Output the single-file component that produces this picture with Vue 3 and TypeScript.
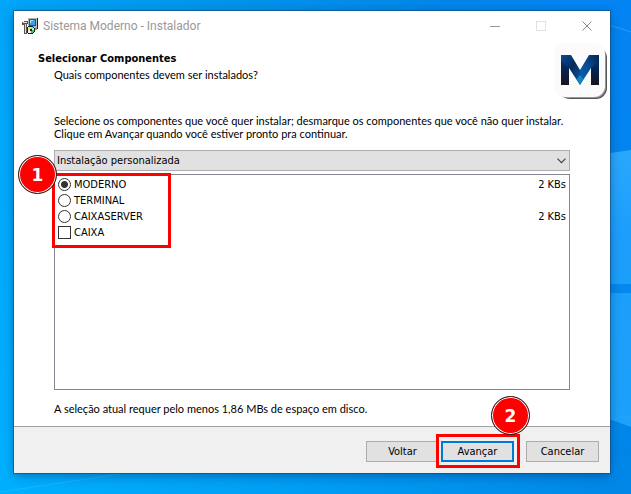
<script setup lang="ts">
import { ref } from 'vue'

interface Component {
  id: string
  label: string
  kind: 'radio' | 'checkbox'
  size?: string
}

const components: Component[] = [
  { id: 'moderno', label: 'MODERNO', kind: 'radio', size: '2 KBs' },
  { id: 'terminal', label: 'TERMINAL', kind: 'radio' },
  { id: 'caixaserver', label: 'CAIXASERVER', kind: 'radio', size: '2 KBs' },
  { id: 'caixa', label: 'CAIXA', kind: 'checkbox' },
]

const setupType = ref('custom')
const chosen = ref('moderno')
const caixa = ref(false)
</script>

<template>
  <div class="desktop">
    <svg class="wallpaper" viewBox="0 0 631 494" preserveAspectRatio="none" aria-hidden="true">
      <defs>
        <linearGradient id="sky" x1="0" y1="0" x2="1" y2="0">
          <stop offset="0" stop-color="#00a6f8" />
          <stop offset="0.35" stop-color="#0094ea" />
          <stop offset="0.7" stop-color="#0086e8" />
          <stop offset="1" stop-color="#0584f4" />
        </linearGradient>
        <linearGradient id="ground" x1="0" y1="0" x2="1" y2="0">
          <stop offset="0" stop-color="#00b0ff" />
          <stop offset="0.5" stop-color="#009cf4" />
          <stop offset="1" stop-color="#0086e6" />
        </linearGradient>
        <linearGradient id="fade" x1="0" y1="0" x2="0" y2="1">
          <stop offset="0" stop-color="#000" />
          <stop offset="1" stop-color="#fff" />
        </linearGradient>
        <mask id="lower"><rect width="631" height="494" fill="url(#fade)" /></mask>
        <linearGradient id="beam" x1="0" y1="0" x2="0" y2="1">
          <stop offset="0" stop-color="#2aa8fc" />
          <stop offset="0.3" stop-color="#1c9efc" />
          <stop offset="1" stop-color="#1ca2fa" />
        </linearGradient>
      </defs>
      <rect width="631" height="494" fill="url(#sky)" />
      <rect width="631" height="494" fill="url(#ground)" mask="url(#lower)" />
      <path d="M590 156 L631 150 V427 L590 412Z" fill="url(#beam)" />
      <path d="M590 284 H631 V293 H590Z" fill="#0588ee" />
      <path d="M600 22 L631 32" stroke="#2c9cfa" stroke-width="1" />
      <path d="M590 422 L631 416" stroke="#28a4f4" stroke-width="1" />
      <path d="M0 492 L120 474" stroke="#18b6ff" stroke-width="1" />
    </svg>

    <main class="window">
      <header class="titlebar">
        <svg class="app-icon" viewBox="0 0 16 16" shape-rendering="crispEdges" aria-hidden="true">
          <path d="M1 4h4v12H2V7H0V5h1z" fill="#777" />
          <path d="M0 4h2V3h4v1h1v2H5v10H2V7H0z" fill="#555" />
          <path d="M1 4h4v1H1zM3 6h1v9H3z" fill="#ddd" />
          <path d="M6 0h10v10H6z" fill="#b8b8a8" />
          <path d="M15 0h1v11H8v-1h7z" fill="#222" />
          <path d="M7 1h7v7H7z" fill="#0754c8" />
          <path d="M8 2h5v5H8z" fill="#37a0ff" />
          <path d="M8 2h3v1H9v2H8z" fill="#a8e4ff" />
          <path d="M10 10h5v2h-4z" fill="#888" />
          <path d="M6 8h5v1h1v1h1v4h-1v1h-1v1H6v-1H5V9h1z" fill="#222" />
          <path d="M6 9h5v1h1v4h-1v1H6z" fill="#eee" />
          <path d="M6 9h3v3H6z" fill="#d8f060" />
          <path d="M9 12h3v2h-1v1H9z" fill="#30c860" />
          <path d="M9 9h2v2H9z" fill="#70e0f0" />
          <path d="M8 11h2v2H8z" fill="#222" />
        </svg>
        <span class="title">Sistema Moderno - Instalador</span>
        <div class="controls">
          <button type="button" aria-label="Minimizar">
            <svg viewBox="0 0 11 11" shape-rendering="crispEdges"><path d="M0 5.5h10" stroke="#999" /></svg>
          </button>
          <button type="button" aria-label="Maximizar" disabled>
            <svg viewBox="0 0 11 11" shape-rendering="crispEdges"><path d="M.5.5h9v9h-9z" fill="none" stroke="#e2e2e2" /></svg>
          </button>
          <button type="button" aria-label="Fechar">
            <svg viewBox="0 0 11 11"><path d="M.5.5l9 9M9.5.5l-9 9" fill="none" stroke="#888" /></svg>
          </button>
        </div>
      </header>

      <section class="heading">
        <div>
          <h1>Selecionar Componentes</h1>
          <p>Quais componentes devem ser instalados?</p>
        </div>
        <svg class="logo" viewBox="0 0 54 56" aria-hidden="true">
          <defs>
            <linearGradient id="stem" x1="0" y1="0" x2="0" y2="1">
              <stop offset="0" stop-color="#063a78" />
              <stop offset="0.5" stop-color="#082450" />
              <stop offset="1" stop-color="#15141c" />
            </linearGradient>
            <linearGradient id="left" x1="0" y1="0" x2="1" y2="1">
              <stop offset="0" stop-color="#0a4a94" />
              <stop offset="0.5" stop-color="#052c5c" />
              <stop offset="1" stop-color="#0b5ca8" />
            </linearGradient>
            <linearGradient id="right" x1="1" y1="0" x2="0" y2="1">
              <stop offset="0" stop-color="#04244e" />
              <stop offset="0.5" stop-color="#084c96" />
              <stop offset="1" stop-color="#0c68b4" />
            </linearGradient>
          </defs>
          <rect x="5" y="4" width="48" height="52" rx="11" fill="#555" />
          <rect x="3" y="3" width="49" height="52" rx="11" fill="#999" />
          <rect x="0" y="0" width="51" height="54" rx="11" fill="#fbfbfb" />
          <path d="M7 12h8v30H7z" fill="url(#stem)" />
          <path d="M37 12h8v30h-8z" fill="url(#stem)" />
          <path d="M7 12h10l9 15v15L15 25 7 18z" fill="url(#left)" />
          <path d="M45 12H35l-9 15v15l11-17 8-7z" fill="url(#right)" />
          <path d="M26 32l3 4-3 6-3-6z" fill="#0f86cc" />
        </svg>
      </section>

      <form class="body" @submit.prevent>
        <p class="intro">
          Selecione os componentes que você quer instalar; desmarque os componentes que você não quer instalar.<br />
          Clique em Avançar quando você estiver pronto pra continuar.
        </p>
        <div class="combo">
          <select v-model="setupType" aria-label="Tipo de instalação">
            <option value="custom">Instalação personalizada</option>
          </select>
          <svg viewBox="0 0 9 6" aria-hidden="true"><path d="M.5.7l4 4 4-4" fill="none" stroke="#444" stroke-width="1.2" /></svg>
        </div>

        <div class="list">
          <div v-for="item in components" :key="item.id" class="row">
            <input v-if="item.kind === 'radio'" :id="item.id" v-model="chosen" type="radio" name="component" :value="item.id" />
            <input v-else :id="item.id" v-model="caixa" type="checkbox" />
            <label :for="item.id">{{ item.label }}</label>
            <span v-if="item.size">{{ item.size }}</span>
          </div>
          <div class="mark mark-list"></div>
          <div class="badge badge-list">1</div>
        </div>
        <p class="space">A seleção atual requer pelo menos 1,86 MBs de espaço em disco.</p>
      </form>

      <footer class="footer">
        <button type="button">Voltar</button>
        <div class="next">
          <button type="button" class="primary">Avançar</button>
          <div class="mark mark-next"></div>
          <div class="badge badge-next">2</div>
        </div>
        <button type="button">Cancelar</button>
      </footer>
    </main>
  </div>
</template>

<style>
body {
  margin: 0;
}
</style>

<style scoped>
.desktop,
.desktop * {
  box-sizing: border-box;
}
.desktop {
  position: relative;
  display: flex;
  min-height: 100vh;
  padding: 11px 21px 21px 14px;
  font: 11px/13px "DejaVu Sans Condensed", "DejaVu Sans", Tahoma, sans-serif;
  color: #000;
}
.wallpaper {
  position: absolute;
  inset: 0;
  width: 100%;
  height: 100%;
}
.window {
  position: relative;
  display: flex;
  flex: 1;
  flex-direction: column;
  min-width: 0;
  background: #fff;
  box-shadow: 0 0 0 1px rgba(20, 70, 110, 0.6), 0 3px 10px rgba(0, 30, 80, 0.4);
}
h1,
p {
  margin: 0;
}
p {
  font-family: Lato, Tahoma, sans-serif;
}
.titlebar {
  display: flex;
  align-items: center;
  height: 30px;
  padding-left: 8px;
}
.app-icon {
  width: 16px;
  height: 16px;
}
.title {
  flex: 1;
  padding-left: 5px;
  font: 12px/16px Roboto, "Segoe UI", sans-serif;
  color: #999;
}
.controls {
  display: flex;
}
.controls button {
  display: flex;
  align-items: center;
  justify-content: center;
  width: 46px;
  height: 30px;
  padding: 0;
  border: 0;
  background: transparent;
}
.controls svg {
  width: 11px;
  height: 11px;
}
.heading {
  display: flex;
  justify-content: space-between;
  padding: 2px 2px 0 24px;
}
h1 {
  padding-top: 9px;
  font-size: 11px;
  font-weight: 700;
  line-height: 13px;
}
.heading p {
  padding: 3px 0 0 16px;
}
.logo {
  width: 54px;
  height: 56px;
}
.body {
  display: flex;
  flex: 1;
  flex-direction: column;
  padding: 15px 40px 11px;
}
.intro {
  white-space: nowrap;
}
.combo {
  position: relative;
  margin-top: 10px;
}
.combo select {
  display: block;
  width: 100%;
  height: 21px;
  padding: 0 24px 0 2px;
  border: 1px solid #adadad;
  border-radius: 0;
  appearance: none;
  background: #e1e1e1;
  font: inherit;
  color: inherit;
}
.combo svg {
  position: absolute;
  top: 8px;
  right: 4px;
  width: 9px;
  height: 6px;
  pointer-events: none;
}
.list {
  position: relative;
  flex: 1;
  min-height: 72px;
  margin-top: 3px;
  padding: 1px 3px;
  border: 1px solid #828790;
}
.row {
  display: flex;
  align-items: center;
  height: 16px;
}
.row input {
  width: 13px;
  height: 13px;
  margin: 0 3px 0 0;
  border: 1px solid #333;
  appearance: none;
  background: #fff;
}
.row input[type="radio"] {
  border-radius: 50%;
}
.row input[type="radio"]:checked {
  background: radial-gradient(circle, #333 3px, #fff 4px);
}
.row label {
  flex: 1;
}
.space {
  margin-top: 12px;
}
.footer {
  display: flex;
  justify-content: flex-end;
  padding: 14px 11px 11px;
  border-top: 1px solid #a0a0a0;
  background: #f0f0f0;
}
.footer button {
  display: block;
  width: 73px;
  height: 21px;
  padding: 0;
  border: 1px solid #adadad;
  background: #e1e1e1;
  font: inherit;
  color: inherit;
}
.footer .primary {
  border: 2px solid #0078d7;
}
.next {
  position: relative;
  margin: 0 12px 0 2px;
}
.mark {
  position: absolute;
  border: 3px solid #f00;
  pointer-events: none;
}
.mark-list {
  top: -2px;
  left: -3px;
  width: 119px;
  height: 75px;
}
.mark-next {
  inset: -7px -6px -6px -5px;
}
.badge {
  position: absolute;
  display: flex;
  align-items: center;
  justify-content: center;
  width: 39px;
  height: 39px;
  border: 1px solid #222;
  border-radius: 50%;
  background: #f00;
  box-shadow: inset 0 0 0 1px #fff;
  font: 700 17px/20px "DejaVu Sans", sans-serif;
  color: #fff;
  pointer-events: none;
}
.badge-list {
  top: -20px;
  left: -37px;
}
.badge-next {
  top: -45px;
  left: 50px;
}
</style>
